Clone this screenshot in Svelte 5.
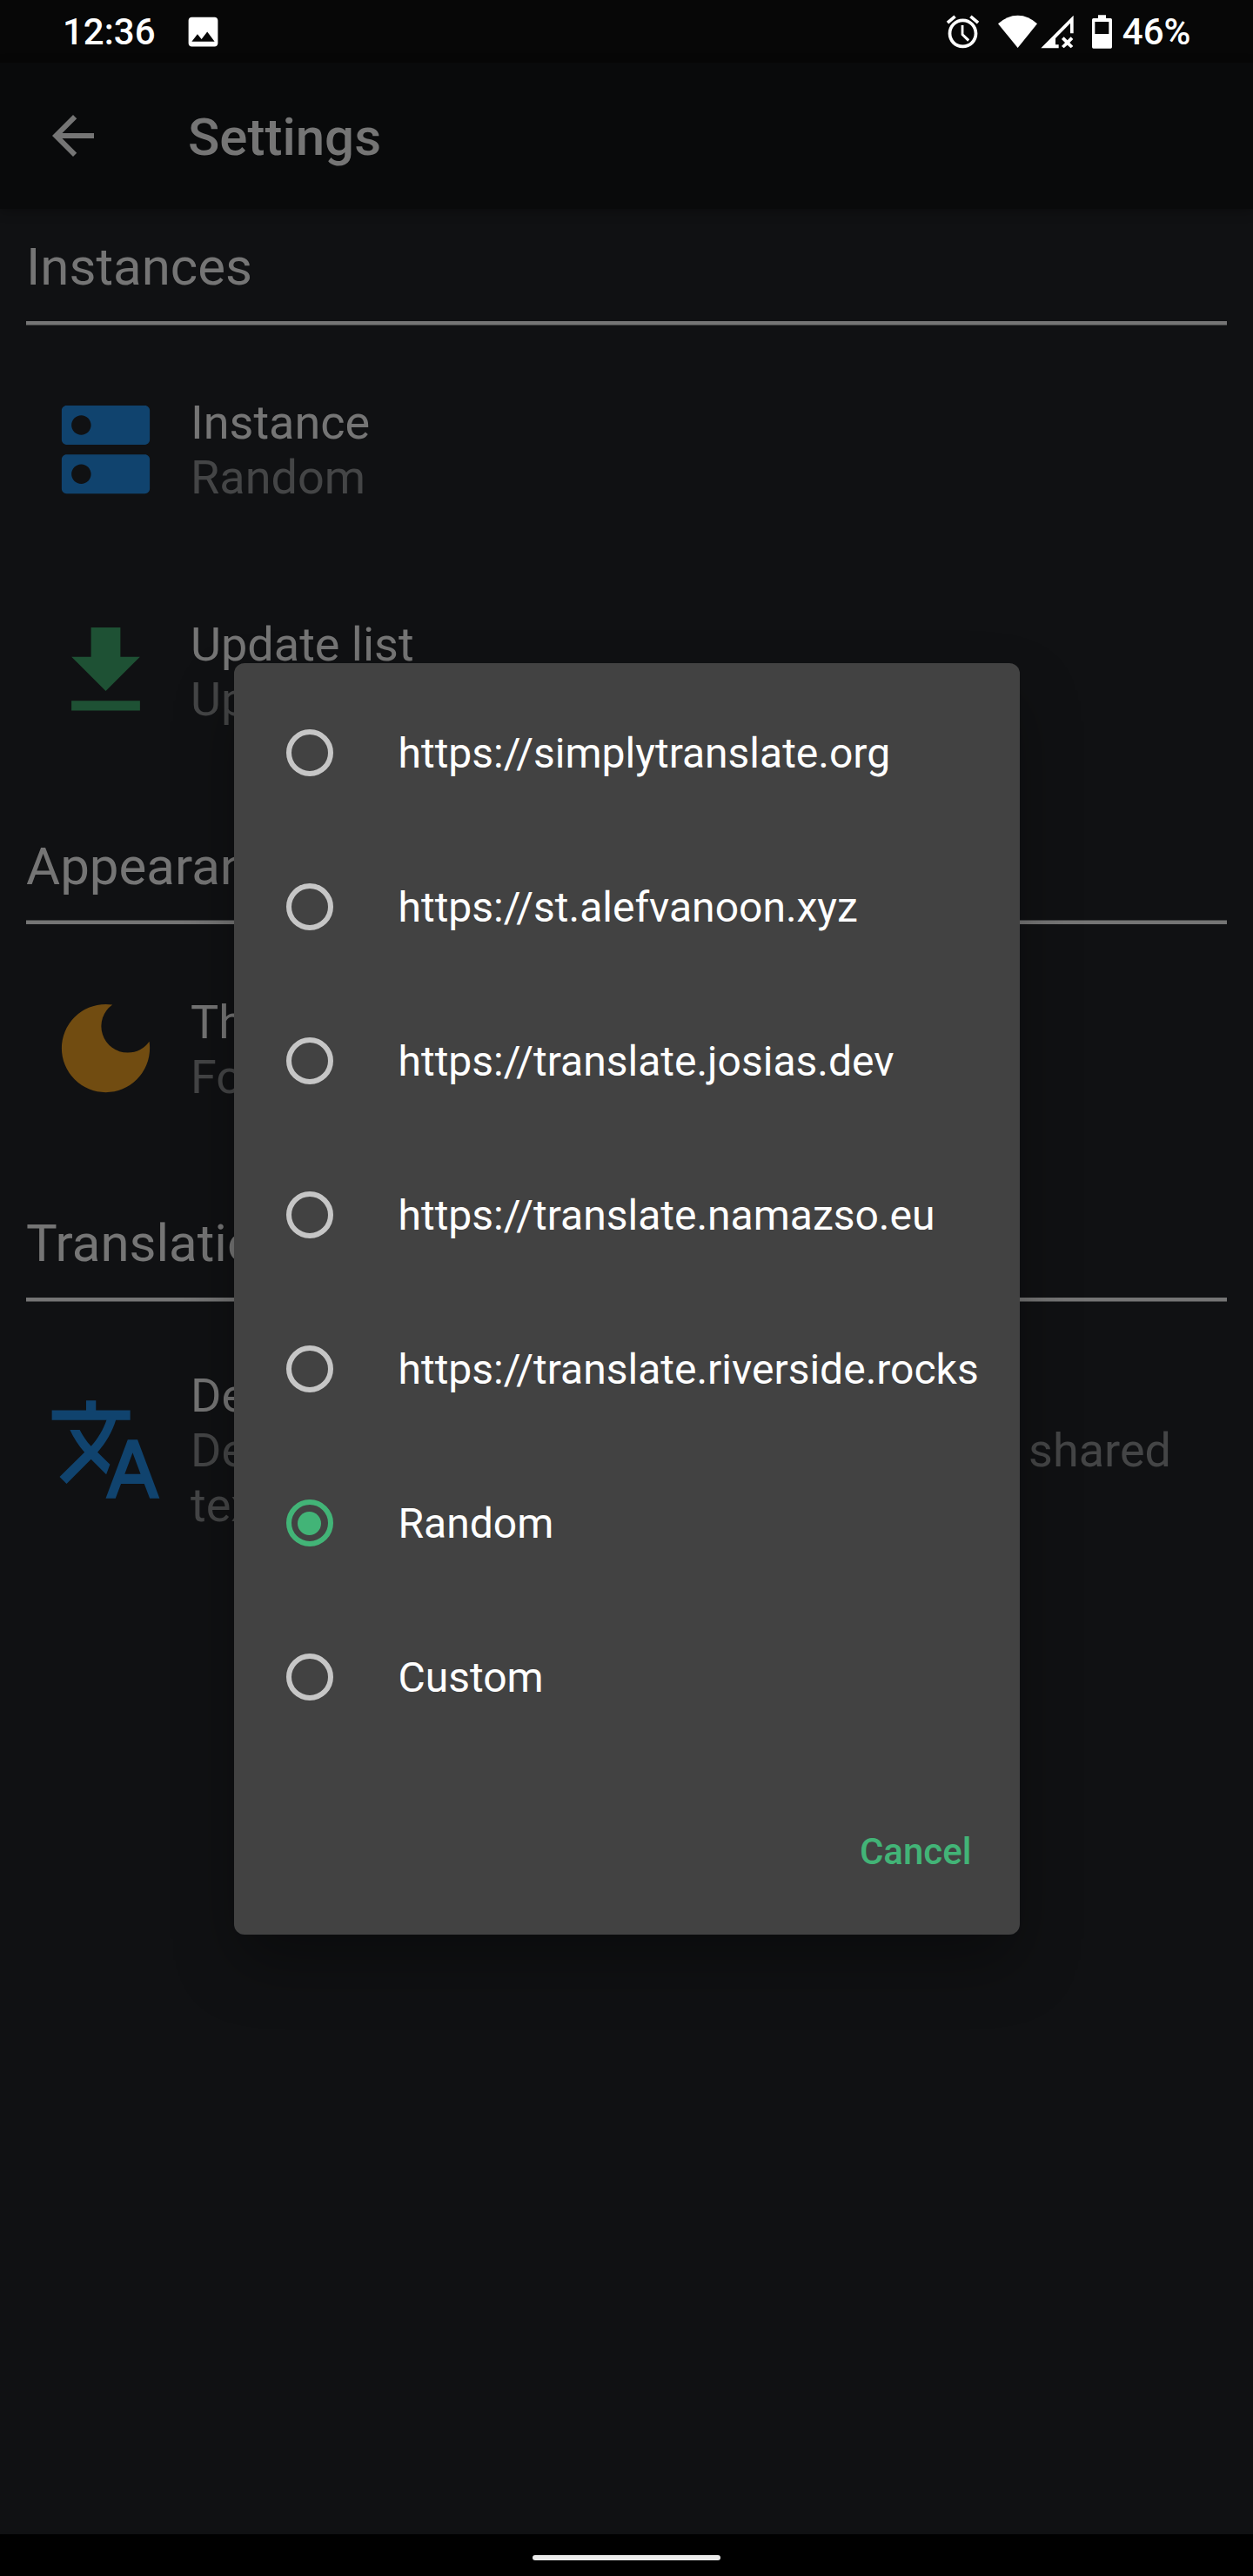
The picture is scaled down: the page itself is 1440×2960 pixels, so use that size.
<script>
  const options = [
    'https://simplytranslate.org',
    'https://st.alefvanoon.xyz',
    'https://translate.josias.dev',
    'https://translate.namazso.eu',
    'https://translate.riverside.rocks',
    'Random',
    'Custom',
  ];
  let selected = $state('Random');
</script>

<div class="screen">
  <div class="statusbar">
    <span class="clock">12:36</span>
    <svg class="picture" viewBox="0 0 24 24"><path d="M21 19V5c0-1.1-.9-2-2-2H5c-1.100 0-2 .9-2 2v14c0 1.100.9 2 2 2h14c1.100 0 2-.9 2-2zM8.500 13.500l2.500 3.010L14.500 12l4.500 6H5l3.500-4.500z" /></svg>
    <span class="spacer"></span>
    <svg class="alarm" viewBox="0 0 24 24"><path d="M22 5.720l-4.600-3.860-1.290 1.530 4.600 3.860L22 5.720zM7.880 3.390L6.600 1.860 2 5.710l1.290 1.530 4.590-3.850zM12.500 8H11v6l4 4 1.100-1.300-3.600-3.400V8zM12 4c-4.970 0-9 4.030-9 9s4.020 9 9 9c4.970 0 9-4.030 9-9s-4.030-9-9-9zm0 16c-3.870 0-7-3.130-7-7s3.130-7 7-7 7 3.130 7 7-3.130 7-7 7z" /></svg>
    <svg class="wifi" viewBox="318 48 135 117"><path d="M386 162 318 79Q349 50 386 50T453 79Z" /></svg>
    <svg class="signal" viewBox="465 48 114 117"><path d="M466 163 578 50V112H567V77L516 129V151H527V163ZM537 132 545 124 557 136 569 124 577 132 565 144 577 156 569 163 557 152 545 163 537 156 549 144Z" /></svg>
    <svg class="battery" viewBox="642 48 69 117"><path fill-rule="evenodd" d="M663 49H690V60H706Q711 60 711 65V159Q711 164 706 164H647Q642 164 642 159V65Q642 60 647 60H663ZM652 72V114H700V72Z" /></svg>
    <span class="percent">46%</span>
  </div>

  <header>
    <svg class="back" viewBox="0 0 24 24"><path d="M20 11H7.830l5.590-5.590L12 4l-8 8 8 8 1.410-1.410L7.830 13H20v-2z" /></svg>
    <h1>Settings</h1>
  </header>

  <main>
    <section>
      <h2>Instances</h2>
      <div class="rule"></div>
      <div class="row">
        <svg class="blue" viewBox="0 0 24 24"><path d="M20 13H4c-.55 0-1 .45-1 1v6c0 .55.45 1 1 1h16c.55 0 1-.45 1-1v-6c0-.55-.45-1-1-1zM7 19c-1.100 0-2-.9-2-2s.9-2 2-2 2 .9 2 2-.9 2-2 2zM20 3H4c-.55 0-1 .45-1 1v6c0 .55.45 1 1 1h16c.55 0 1-.45 1-1V4c0-.55-.45-1-1-1zM7 9c-1.100 0-2-.9-2-2s.9-2 2-2 2 .9 2 2-.9 2-2 2z" /></svg>
        <div class="label"><p>Instance</p><p class="sub">Random</p></div>
      </div>
      <div class="row">
        <svg class="green" viewBox="0 0 24 24"><path d="M19 9h-4V3H9v6H5l7 7 7-7zM5 18v2h14v-2H5z" /></svg>
        <div class="label"><p>Update list</p><p class="sub">Update instances</p></div>
      </div>
    </section>

    <section class="appearance">
      <h2>Appearance</h2>
      <div class="rule low"></div>
      <div class="row">
        <svg class="orange" viewBox="0 0 24 24"><path d="M12 3a9 9 0 1 0 9 9c0-.46-.04-.92-.1-1.360a5.389 5.389 0 0 1-4.400 2.260 5.403 5.403 0 0 1-3.140-9.800c-.44-.06-.9-.1-1.360-.1z" /></svg>
        <div class="label"><p>Theme</p><p class="sub">Follow system</p></div>
      </div>
    </section>

    <section class="translation">
      <h2>Translation</h2>
      <div class="rule"></div>
      <div class="row tall">
        <svg class="blue" viewBox="0 0 24 24"><path d="M12.870 15.070l-2.540-2.510.03-.03c1.740-1.940 2.980-4.170 3.710-6.530H17V4h-7V2H8v2H1v1.990h11.170C11.500 7.920 10.440 9.750 9 11.350 8.070 10.320 7.300 9.190 6.690 8h-2c.73 1.630 1.730 3.170 2.980 4.560l-5.090 5.020L4 19l5-5 3.110 3.110.76-2.040zM18.500 10h-2L12 22h2l1.120-3h4.750L21 22h2l-4.500-12zm-2.620 7l1.620-4.330L19.120 17h-3.240z" /></svg>
        <div class="label"><p>Default language</p><p class="sub wide">Default language to translate to for the shared text</p></div>
      </div>
    </section>
  </main>

  <div class="navbar"><span></span></div>

  <div class="overlay">
    <div class="dialog" role="dialog">
      <div class="options" role="radiogroup">
        {#each options as option}
          <button class="option" role="radio" aria-checked={selected === option} onclick={() => (selected = option)}>
            <span class="radio" class:on={selected === option}></span>
            <span class="name">{option}</span>
          </button>
        {/each}
      </div>
      <button class="cancel">Cancel</button>
    </div>
  </div>
</div>

<style>
  :global(body) { background: #101113; }
  * { box-sizing: border-box; }
  h1, h2, p { margin: 0; font-weight: 400; }
  button { border: 0; padding: 0; background: none; font: inherit; color: inherit; text-align: left; }
  svg { display: block; flex: none; fill: currentColor; }
  .screen {
    position: relative;
    display: flex;
    flex-direction: column;
    width: 1440px;
    height: 2960px;
    overflow: hidden;
    background: #101113;
    color: #757575;
    font-family: Roboto, sans-serif;
  }
  .statusbar {
    display: flex;
    align-items: center;
    height: 72px;
    padding: 0 71.5px 0 72px;
    background: #070707;
    color: #fff;
    font-size: 42px;
    font-weight: 500;
    line-height: 72px;
  }
  .clock { width: 138.500px; padding-top: 2px; }
  .spacer { flex: 1; }
  .picture { width: 45px; height: 45px; }
  .alarm { width: 45px; height: 45px; margin-right: 18px; }
  .wifi { width: 45px; height: 39px; margin-right: 4px; }
  .signal { width: 38px; height: 39px; margin-right: 21px; }
  .battery { width: 23px; height: 39px; margin-right: 12px; }
  .percent { padding-top: 2px; }
  header {
    display: flex;
    align-items: center;
    gap: 96px;
    height: 168px;
    padding-left: 48px;
    background: #090a0b;
    box-shadow: 0 3px 12px rgba(0, 0, 0, .3);
  }
  .back { width: 72px; height: 72px; }
  h1 { font-size: 60px; font-weight: 500; line-height: 70px; padding-top: 4px; }
  main { flex: 1; padding: 0 30px; }
  section { height: 688px; }
  section.appearance { height: 434px; }
  h2 { height: 129px; padding-top: 32px; font-size: 60px; line-height: 70px; }
  .appearance h2 { padding-top: 33px; }
  .rule { height: 5px; background: #757575; border-bottom: 1px solid #444546; }
  .rule.low { border-bottom: 0; border-top: 1px solid #444546; }
  .row { display: flex; align-items: center; gap: 30px; height: 255px; margin-top: 15px; padding-left: 24px; }
  .row + .row { margin-top: 0; }
  .row svg { width: 135px; height: 135px; }
  .label { padding-top: 1px; font-size: 54px; line-height: 63px; }
  .appearance .label { padding-top: 3px; }
  .sub { color: #444546; }
  .wide { width: 1127px; text-align: justify; }
  .row.tall { height: 309px; }
  .blue { color: #10436e; }
  .green { color: #1e5134; }
  .orange { color: #714c11; }
  .navbar { display: flex; justify-content: center; height: 48px; padding-top: 24px; background: #000; }
  .navbar span { width: 216px; height: 6px; border-radius: 3px; background: #ebebeb; }
  .overlay { position: absolute; inset: 72px 0 48px; display: flex; align-items: center; justify-content: center; }
  .dialog {
    display: flex;
    flex-direction: column;
    width: 903px;
    height: 1461px;
    padding-top: 15px;
    border-radius: 12px;
    background: #424242;
    box-shadow: 0 36px 72px -6px rgba(0, 0, 0, .35);
  }
  .options { display: flex; flex-direction: column; }
  .option {
    display: flex;
    align-items: center;
    gap: 75px;
    height: 177px;
    padding-left: 60px;
    color: #fff;
    font-size: 48px;
    line-height: 56px;
    white-space: nowrap;
  }
  .name { padding-top: 1px; }
  .radio {
    display: flex;
    align-items: center;
    justify-content: center;
    width: 54px;
    height: 54px;
    border: 6px solid #c6c6c6;
    border-radius: 50%;
  }
  .radio.on { border-color: #42b477; }
  .radio.on::after { content: ''; width: 27px; height: 27px; border-radius: 50%; background: #42b477; }
  .cancel { align-self: flex-end; margin: 87px 55px 0 0; color: #42b477; font-size: 42px; font-weight: 500; line-height: 50px; }
</style>
